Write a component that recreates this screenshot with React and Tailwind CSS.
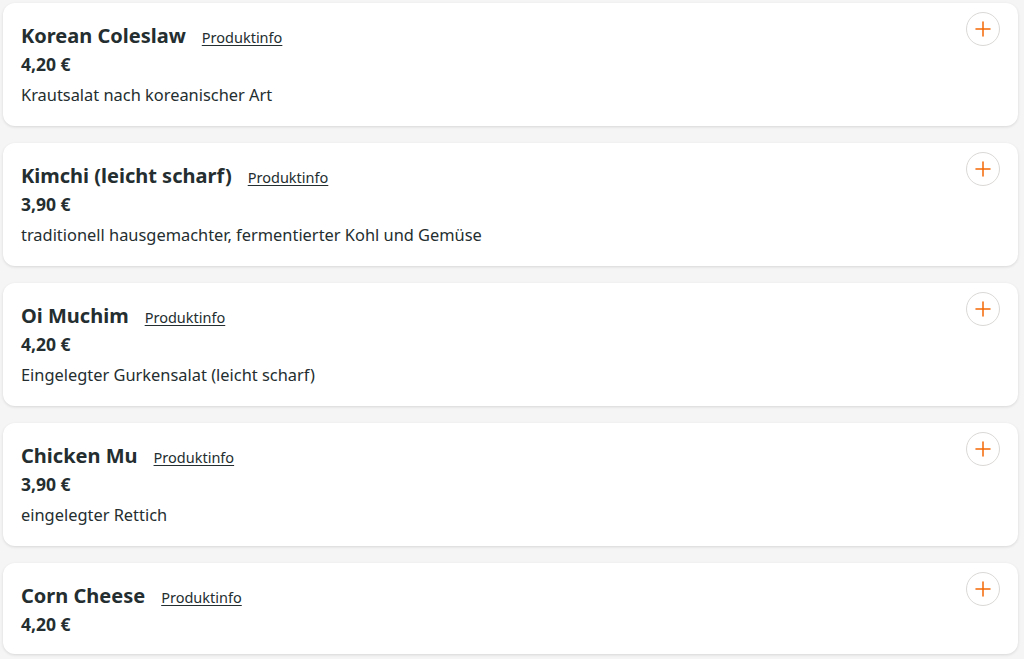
import React from 'react';

const items = [
    { name: 'Korean Coleslaw', price: '4,20 €', desc: 'Krautsalat nach koreanischer Art' },
    { name: 'Kimchi (leicht scharf)', price: '3,90 €', desc: 'traditionell hausgemachter, fermentierter Kohl und Gemüse' },
    { name: 'Oi Muchim', price: '4,20 €', desc: 'Eingelegter Gurkensalat (leicht scharf)' },
    { name: 'Chicken Mu', price: '3,90 €', desc: 'eingelegter Rettich' },
    { name: 'Corn Cheese', price: '4,20 €', desc: null },
];

const PlusIcon = () => (
    <svg width="16" height="16" viewBox="0 0 16 16" fill="none">
        <path d="M8 1v14M1 8h14" stroke="#f36805" strokeWidth="1.5" strokeLinecap="round" />
    </svg>
);

const App = () => {
    return (
        <div className="min-h-[659px] bg-[#f5f5f5] pl-[3px] pr-[6px] pt-[3px] flex flex-col gap-[17px]" style={{ fontFamily: '"Noto Sans", sans-serif' }}>
            {items.map((item) => (
                <div key={item.name} className="bg-white rounded-xl shadow-[0_1px_3px_rgba(0,0,0,0.12)] flex justify-between pl-[18px] pr-[18px] pt-[9px] pb-[19px] text-[#242e30]">
                    <div className="pt-[11px]">
                        <div className="flex items-baseline gap-4 h-[26px]">
                            <h3 className="text-[20px] font-bold leading-[26px]">{item.name}</h3>
                            <a href="#" className="text-[14.5px] underline underline-offset-2 leading-[20px]">Produktinfo</a>
                        </div>
                        <div className="mt-1 text-[17.5px] font-bold leading-[22px]">{item.price}</div>
                        {item.desc && <p className="mt-2 text-[16.4px] leading-[24px]">{item.desc}</p>}
                    </div>
                    <button className="w-[34px] h-[34px] rounded-full border border-[#dbd9d7] flex items-center justify-center shrink-0">
                        <PlusIcon />
                    </button>
                </div>
            ))}
        </div>
    );
};

export default App;
